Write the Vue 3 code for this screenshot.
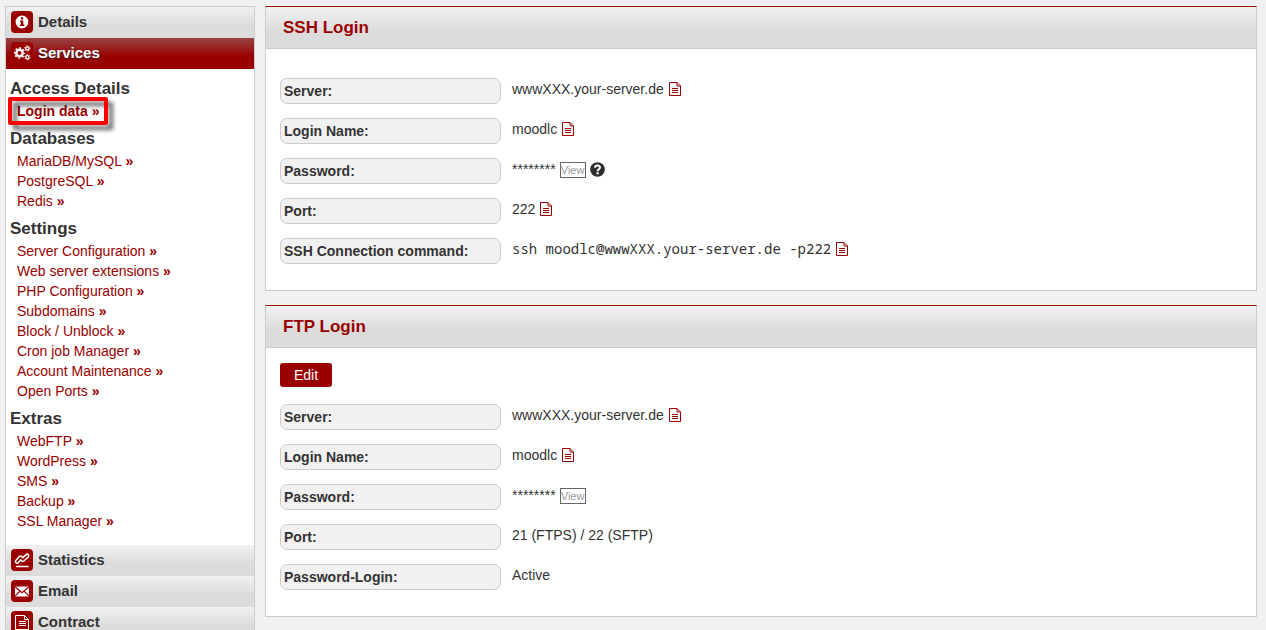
<script setup>
const groups = [
  { title: 'Access Details', links: ['Login data'], current: true },
  { title: 'Databases', links: ['MariaDB/MySQL', 'PostgreSQL', 'Redis'] },
  {
    title: 'Settings',
    links: [
      'Server Configuration',
      'Web server extensions',
      'PHP Configuration',
      'Subdomains',
      'Block / Unblock',
      'Cron job Manager',
      'Account Maintenance',
      'Open Ports',
    ],
  },
  { title: 'Extras', links: ['WebFTP', 'WordPress', 'SMS', 'Backup', 'SSL Manager'] },
]

const panels = [
  {
    title: 'SSH Login',
    rows: [
      { label: 'Server:', value: 'wwwXXX.your-server.de', copy: true },
      { label: 'Login Name:', value: 'moodlc', copy: true },
      { label: 'Password:', value: '********', view: true, help: true },
      { label: 'Port:', value: '222', copy: true },
      { label: 'SSH Connection command:', value: 'ssh moodlc@wwwXXX.your-server.de -p222', copy: true, mono: true },
    ],
  },
  {
    title: 'FTP Login',
    edit: true,
    rows: [
      { label: 'Server:', value: 'wwwXXX.your-server.de', copy: true },
      { label: 'Login Name:', value: 'moodlc', copy: true },
      { label: 'Password:', value: '********', view: true },
      { label: 'Port:', value: '21 (FTPS) / 22 (SFTP)' },
      { label: 'Password-Login:', value: 'Active' },
    ],
  },
]
</script>

<template>
  <div class="page">
    <nav class="sidebar">
      <a href="#" class="section">
        <svg class="tile" viewBox="0 0 22 22" aria-hidden="true">
          <circle cx="11" cy="11" r="6.4" fill="#fff" />
          <path d="M9.8 6.3h2.4v2.2H9.8zM8.9 9.5h3.4v4h1v1.6H8.8v-1.6h1.1V11h-1z" fill="#900" />
        </svg>
        Details
      </a>
      <a href="#" class="section active">
        <svg class="tile" viewBox="0 0 22 22" aria-hidden="true">
          <g fill="none" stroke="#fff">
            <circle cx="8.5" cy="11" r="3.2" stroke-width="2.4" />
            <circle cx="8.5" cy="11" r="4.9" stroke-width="1.5" stroke-dasharray="1.92 1.92" stroke-dashoffset="0.96" />
            <circle cx="16.4" cy="6.4" r="1.6" stroke-width="1.3" />
            <circle cx="16.4" cy="6.4" r="2.6" stroke-width="1" stroke-dasharray="1.36 1.36" />
            <circle cx="16.4" cy="15.2" r="1.6" stroke-width="1.3" />
            <circle cx="16.4" cy="15.2" r="2.6" stroke-width="1" stroke-dasharray="1.36 1.36" />
          </g>
        </svg>
        Services
      </a>

      <div class="menu">
        <section v-for="group in groups" :key="group.title" class="group">
          <h2>{{ group.title }}</h2>
          <ul>
            <li v-for="link in group.links" :key="link">
              <a href="#" :class="{ current: group.current }">{{ link }} <b>»</b></a>
            </li>
          </ul>
        </section>
      </div>

      <a href="#" class="section">
        <svg class="tile" viewBox="0 0 22 22" aria-hidden="true">
          <g fill="none" stroke-linecap="round" stroke-linejoin="round">
            <path d="M6 12.600 9.600 8.600 11.800 10.800 16.200 6.800" stroke="#fff" stroke-width="4.600" />
            <path d="M6 12.600 9.600 8.600 11.800 10.800 16.200 6.800" stroke="#900" stroke-width="1.600" />
            <path d="M5.500 17.500h11.500" stroke="#fff" stroke-width="1.500" />
          </g>
        </svg>
        Statistics
      </a>
      <a href="#" class="section">
        <svg class="tile" viewBox="0 0 22 22" aria-hidden="true">
          <path d="M4 6.6h14v9.8H4z" fill="#fff" />
          <path d="m4 6.8 7 6 7-6M4 16.2l5-5M18 16.2l-5-5" fill="none" stroke="#900" stroke-width="1.2" />
        </svg>
        Email
      </a>
      <a href="#" class="section">
        <svg class="tile" viewBox="0 0 22 22" aria-hidden="true">
          <g fill="none" stroke="#fff">
            <path d="M4.500 4.500h9l4 4v10h-13zM13.500 4.500v4h4" />
            <path d="M8 10.500h7M8 12.500h7M8 14.500h7" />
          </g>
        </svg>
        Contract
      </a>
    </nav>

    <main>
      <section v-for="panel in panels" :key="panel.title" class="panel" :class="{ editable: panel.edit }">
        <h1>{{ panel.title }}</h1>
        <div class="body">
          <button v-if="panel.edit" type="button" class="edit">Edit</button>
          <dl>
            <div v-for="row in panel.rows" :key="row.label" class="row">
              <dt>{{ row.label }}</dt>
              <dd>
                <span :class="{ mono: row.mono }">{{ row.value }}</span>
                <button v-if="row.copy" type="button" class="icon" aria-label="Copy">
                  <svg width="14" height="14" viewBox="0 0 14 14" fill="none" stroke="#900" aria-hidden="true">
                    <path d="M1.500.5h7.500l3.500 3.500v9.500h-11zM9 .5v3.500h3.500" />
                    <path d="M4 6.500h6M4 8.500h6M4 10.500h6" />
                  </svg>
                </button>
                <button v-if="row.view" type="button" class="view">View</button>
                <button v-if="row.help" type="button" class="icon help" aria-label="Help">
                  <svg width="15" height="15" viewBox="0 0 15 15" aria-hidden="true">
                    <circle cx="7.5" cy="7.5" r="7.3" fill="#2d2d2d" />
                    <path d="M5 5.8C5.100 3 10 2.800 10 5.600 10 7.300 7.600 7.200 7.600 9.200" fill="none" stroke="#fff" stroke-width="2" />
                    <path d="M6.500 10.300h2.200v2H6.500z" fill="#fff" />
                  </svg>
                </button>
              </dd>
            </div>
          </dl>
        </div>
      </section>
    </main>
  </div>
</template>

<style>
body {
  margin: 0;
  background: #f1f1f1;
  overflow: hidden;
}
</style>

<style scoped>
.page {
  display: flex;
  align-items: flex-start;
  gap: 10px;
  padding: 6px 9px 0 5px;
  font: 14px/20px "Liberation Sans", Arial, sans-serif;
  color: #333;
}
.sidebar {
  flex: 0 0 248px;
  border: 1px solid #ccc;
  background: #fff;
}
a {
  color: #900;
  text-decoration: none;
}
.section {
  box-sizing: border-box;
  display: flex;
  align-items: center;
  gap: 5px;
  height: 31px;
  padding: 0 0 1px 5px;
  background: linear-gradient(#f1f1f1, #dcdcdc 60%);
  color: #333;
  font-size: 15px;
  font-weight: bold;
}
.section.active {
  background: linear-gradient(#944, #900 60%);
  color: #fff;
  text-shadow: 1px 1px 2px #333;
}
.tile {
  width: 22px;
  height: 22px;
  border-radius: 4px;
  background: #900;
}
.menu {
  display: grid;
  gap: 6px;
  padding: 8px 4px 14px;
}
h2 {
  margin: 0;
  font-size: 17px;
  line-height: 24px;
}
ul {
  margin: 0;
  padding: 0 0 0 7px;
  list-style: none;
}
.current {
  position: relative;
  font-weight: bold;
}
.current::after {
  content: "";
  position: absolute;
  inset: -6px -9px;
  border: 4px solid #f00;
  border-radius: 2px;
  filter: drop-shadow(5px 5px 2px rgba(0, 0, 0, 0.6));
}
main {
  flex: 1;
  display: grid;
  gap: 14px;
}
.panel {
  border: 1px solid #ccc;
  border-top-color: #900;
  background: #fff;
}
h1 {
  margin: 0;
  padding: 0 17px;
  border-bottom: 1px solid #ccc;
  background: linear-gradient(#f1f1f1, #dcdcdc 60%);
  color: #900;
  font-size: 17px;
  line-height: 41px;
}
.body {
  padding: 29px 14px 26px;
}
.editable .body {
  padding-top: 15px;
}
.edit {
  display: block;
  height: 24px;
  margin-bottom: 17px;
  padding: 0 14px;
  border: 0;
  border-radius: 3px;
  background: #900;
  color: #fff;
  font: inherit;
}
dl {
  display: grid;
  gap: 14px;
  margin: 0;
}
.row {
  display: flex;
  gap: 11px;
}
dt {
  box-sizing: border-box;
  width: 221px;
  height: 26px;
  padding-left: 3px;
  border: 1px solid #ccc;
  border-radius: 7px;
  background: #f1f1f1;
  font-weight: bold;
  line-height: 24px;
}
dd {
  display: flex;
  align-items: center;
  gap: 4px;
  height: 22px;
  margin: 0;
}
.mono {
  font-family: "Noto Sans Mono", "Droid Sans Mono", "DejaVu Sans Mono", monospace;
}
.icon {
  display: flex;
  padding: 0;
  border: 0;
  background: none;
}
.view {
  box-sizing: border-box;
  width: 26px;
  height: 16px;
  margin-top: 2px;
  padding: 0;
  border: 1px solid #666;
  background: #fff;
  color: #999;
  font: 11px/14px "Liberation Sans", Arial, sans-serif;
}
</style>
